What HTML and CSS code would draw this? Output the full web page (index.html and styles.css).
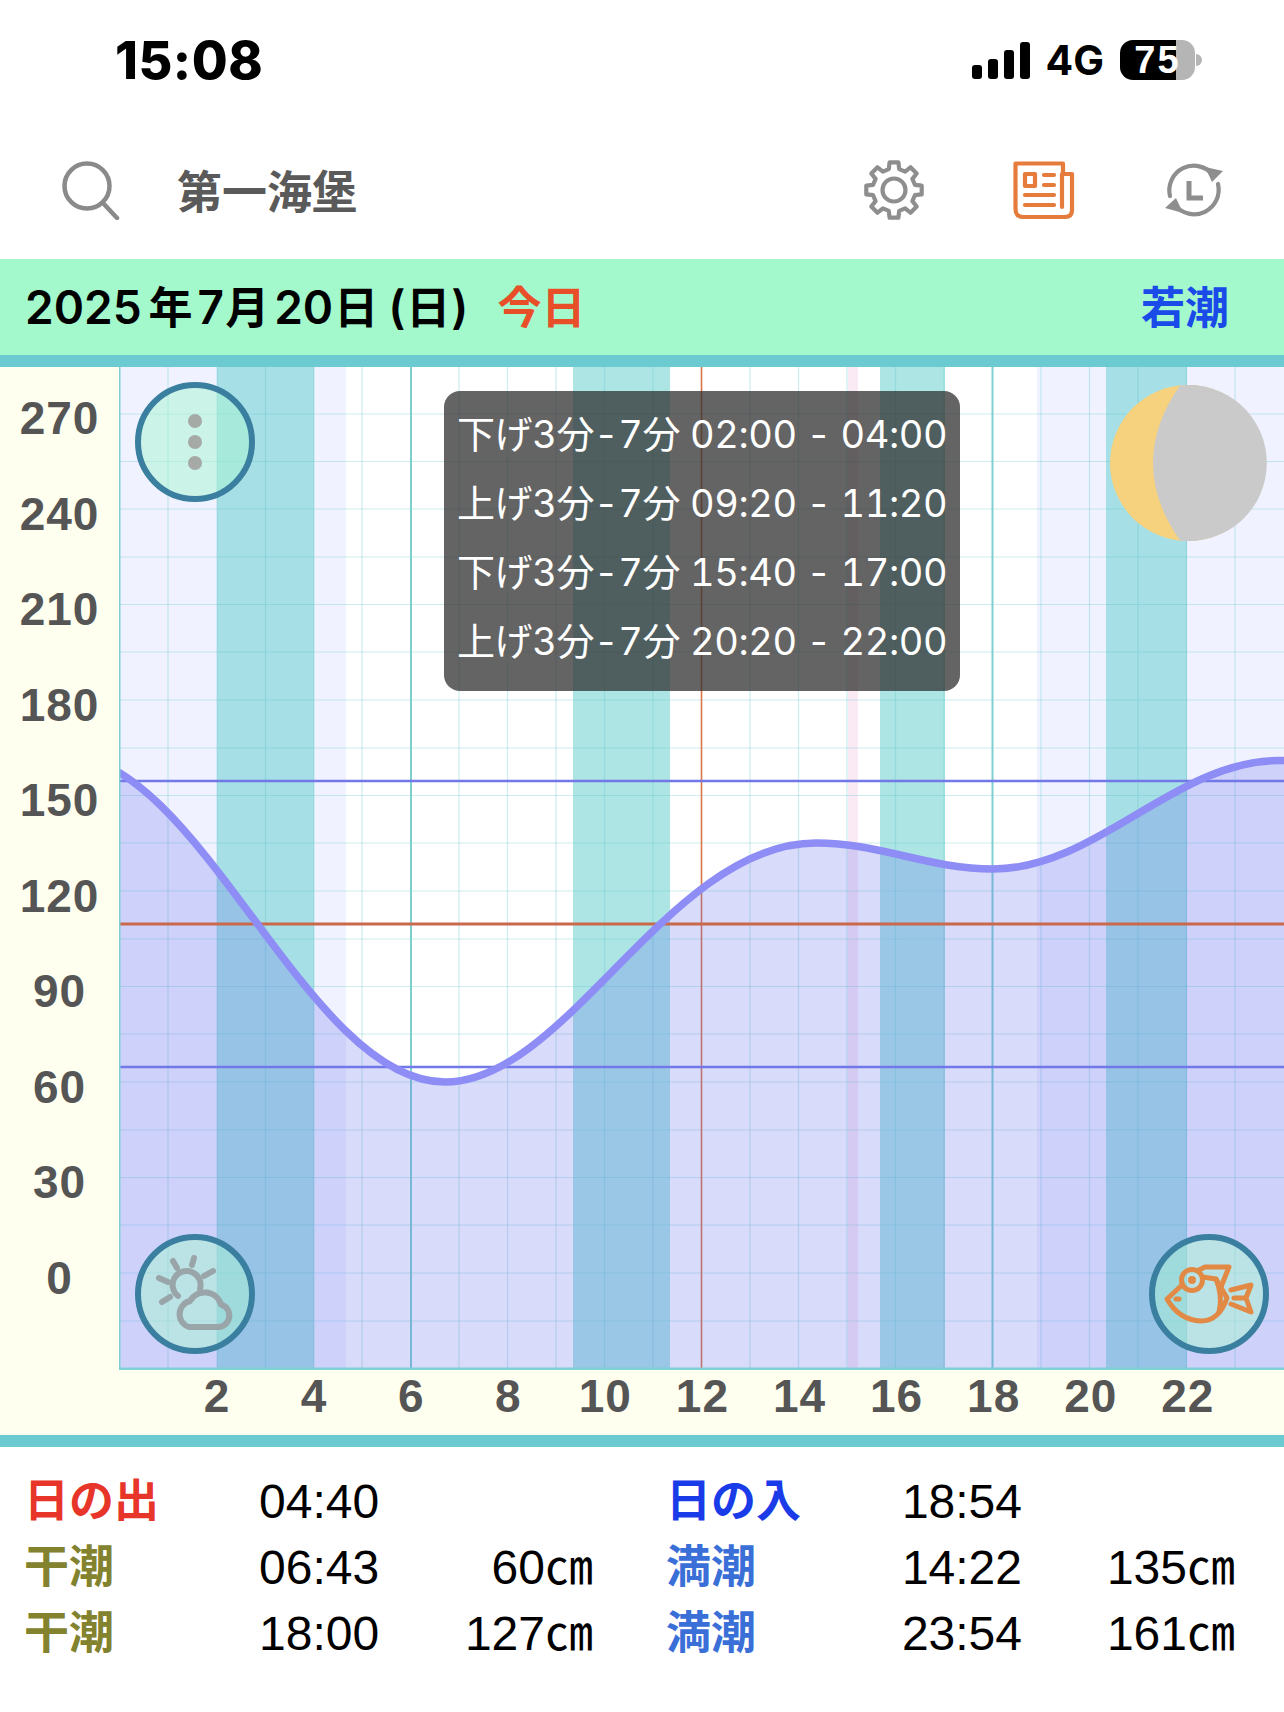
FILE: index.html
```html
<!DOCTYPE html>
<html lang="ja">
<head>
    <meta charset="UTF-8">
    <meta name="viewport" content="width=device-width, initial-scale=1.0">
    <title>潮見表</title>
    <link rel="stylesheet" href="styles.css">
</head>
<body>

    <div class="status-bar">
        <div class="clock-text">15:08</div>
        <div class="status-right">
            <svg class="signal" width="58" height="37" viewBox="0 0 58 37">
                <rect x="0" y="23" width="10" height="14" rx="3"/>
                <rect x="16" y="17" width="10" height="20" rx="3"/>
                <rect x="32" y="8" width="10" height="29" rx="3"/>
                <rect x="48" y="0" width="10" height="37" rx="3"/>
            </svg>
            <div class="network">4G</div>
            <div class="battery">75</div>
        </div>
    </div>

    <div class="search-row">
        <svg class="search-icon" width="60" height="60" viewBox="0 0 60 60">
            <circle cx="25" cy="26" r="22.5"/>
            <path d="M41 43 L55 58"/>
        </svg>
        <div class="place">第一海堡</div>
        <div class="tools">
            <svg class="tool gray" width="64" height="64" viewBox="-32 -32 64 64">
                <polygon points="-5.2,-20.9 -4.4,-27.7 4.4,-27.7 5.2,-20.9 11.1,-18.4 16.5,-22.7 22.7,-16.5 18.4,-11.1 20.9,-5.2 27.7,-4.4 27.7,4.4 20.9,5.2 18.4,11.1 22.7,16.5 16.5,22.7 11.1,18.4 5.2,20.9 4.4,27.7 -4.4,27.7 -5.2,20.9 -11.1,18.4 -16.5,22.7 -22.7,16.5 -18.4,11.1 -20.9,5.2 -27.7,4.4 -27.7,-4.4 -20.9,-5.2 -18.4,-11.1 -22.7,-16.5 -16.5,-22.7 -11.1,-18.4"/>
                <circle cx="0" cy="0" r="11.5"/>
            </svg>
            <svg class="tool orange" width="64" height="64" viewBox="-2 -4 64 64">
                <path d="M1.5 1.5 H49 V12 H58 V48 Q58 55 51 55 H9 Q1.5 55 1.5 47 Z"/>
                <path d="M48 12 V45"/>
                <rect x="11" y="12" width="10" height="12"/>
                <path d="M30 13 H40 M30 23 H40 M11 33 H40 M11 43 H40"/>
            </svg>
            <svg class="tool gray" width="64" height="64" viewBox="-32 -32 64 64">
                <path d="M-24 6 A24.5 24.5 0 0 1 19 -15"/>
                <path d="M24 -6 A24.5 24.5 0 0 1 -19 15"/>
                <polygon class="solid" points="11,-23 29,-19 18,-8"/>
                <polygon class="solid" points="-11,23 -29,18 -18,8"/>
                <path class="thick" d="M-5 -9 V8 H9"/>
            </svg>
        </div>
    </div>

    <div class="date-bar">
        <div class="date">2025<span class="kanji">年</span>7<span class="kanji tight">月</span>20<span class="kanji tight">日</span><span class="paren">(</span><span class="kanji flat">日</span>)</div>
        <div class="today">今日</div>
        <div class="tide-name">若潮</div>
    </div>

    <div class="chart">
        <div class="y-axis">
            <div>270</div>
            <div>240</div>
            <div>210</div>
            <div>180</div>
            <div>150</div>
            <div>120</div>
            <div>90</div>
            <div>60</div>
            <div>30</div>
            <div>0</div>
        </div>
        <div class="plot">
            <svg class="plot-svg" width="1165" height="1003" viewBox="0 0 1165 1003">
                <!-- 夜 -->
                <rect class="night" x="0" y="0" width="227" height="1003"/>
                <rect class="night" x="918" y="0" width="247" height="1003"/>
                <!-- 時合 -->
                <rect class="band" x="98" y="0" width="97" height="1003"/>
                <rect class="band" x="454" y="0" width="97" height="1003"/>
                <rect class="band" x="761" y="0" width="65" height="1003"/>
                <rect class="band" x="987" y="0" width="81" height="1003"/>
                <!-- 現在時刻 -->
                <rect class="now" x="729" y="0" width="10" height="1003"/>
                <!-- グリッド -->
                <path class="grid" d="M0 47 H1165 M0 94.5 H1165 M0 142 H1165 M0 190 H1165 M0 237.5 H1165 M0 285 H1165 M0 333 H1165 M0 381 H1165 M0 428.5 H1165 M0 476 H1165 M0 524 H1165 M0 572 H1165 M0 619.5 H1165 M0 667 H1165 M0 715 H1165 M0 763 H1165 M0 810.5 H1165 M0 858 H1165 M0 906 H1165 M0 954 H1165"/>
                <path class="grid" d="M49 0 V1003 M98 0 V1003 M146.5 0 V1003 M195 0 V1003 M243 0 V1003 M340 0 V1003 M388.5 0 V1003 M437 0 V1003 M485.5 0 V1003 M534 0 V1003 M631 0 V1003 M679.5 0 V1003 M728 0 V1003 M776.5 0 V1003 M825 0 V1003 M922 0 V1003 M970.5 0 V1003 M1019 0 V1003 M1067.5 0 V1003 M1116 0 V1003"/>
                <path class="grid-major" d="M292 0 V1003 M873.5 0 V1003"/>
                <path class="grid-noon" d="M582.5 0 V1003"/>
                <!-- 潮位 -->
                <path class="water" d="M-58 387 C82 387 186 715 326 715 C448 715 550 476 697 476 C761 476 810 502 874 502 C978 502 1056 393.5 1160 393.5 L1170 393.5 V1003 H-58 Z"/>
                <path class="line-blue" d="M0 414 H1165 M0 700 H1165"/>
                <path class="line-orange" d="M0 557 H1165"/>
                <path class="curve" d="M-58 387 C82 387 186 715 326 715 C448 715 550 476 697 476 C761 476 810 502 874 502 C978 502 1056 393.5 1160 393.5 L1170 393.5"/>
                <path class="frame" d="M0 0 V1002 H1165"/>
                <!-- 月齢 -->
                <circle class="moon-lit" cx="1069" cy="96" r="78"/>
                <path class="moon-dark" d="M1061 18.5 A78 78 0 1 1 1061 173.5 Q1034 135 1034 96 Q1034 57 1061 18.5 Z"/>
            </svg>

            <div class="round-btn top-left">
                <div class="dots"><span></span><span></span><span></span></div>
            </div>

            <div class="round-btn bottom-left">
                <svg class="btn-icon weather" width="108" height="108" viewBox="-54 -54 108 108">
                    <path d="M-17 2 A14 14 0 1 1 5 -5"/>
                    <path d="M-3 -29 L-1 -36 M-22 -33 L-18 -26 M9 -18 L18 -23 M-36 -16 L-27 -12 M-33 8 L-25 3"/>
                    <path d="M-6 33 H24 A11.5 11.5 0 0 0 26 10.5 A17 17 0 0 0 -5 7 A13.5 13.5 0 0 0 -6 33 Z"/>
                </svg>
            </div>

            <div class="round-btn bottom-right">
                <svg class="btn-icon fish" width="108" height="108" viewBox="-54 -54 108 108">
                    <circle cx="-17" cy="-14" r="10.5"/>
                    <circle class="pupil" cx="-17" cy="-14" r="4"/>
                    <path d="M-27 -9 L-42 5 Q-30 26 -8 27 Q10 27 18 4 L7 -15 L-6 -17"/>
                    <path d="M-33 5 H-30"/>
                    <path d="M-10 -24 L-4 -27 H20 L12 -7"/>
                    <path d="M22 -4 L42 -9 L37 4 L42 18 L22 10 M25 4 H37"/>
                    <path d="M7 -15 Q14 2 10 18"/>
                </svg>
            </div>

            <div class="tip">
                <div>下げ3分-7分 02:00 - 04:00</div>
                <div>上げ3分-7分 09:20 - 11:20</div>
                <div>下げ3分-7分 15:40 - 17:00</div>
                <div>上げ3分-7分 20:20 - 22:00</div>
            </div>
        </div>
    </div>

    <div class="x-axis">
        <div>2</div>
        <div>4</div>
        <div>6</div>
        <div>8</div>
        <div>10</div>
        <div>12</div>
        <div>14</div>
        <div>16</div>
        <div>18</div>
        <div>20</div>
        <div>22</div>
    </div>

    <div class="tide-table">
        <div class="label sunrise">日の出</div>
        <div class="time">04:40</div>
        <div class="height"></div>
        <div class="label sunset">日の入</div>
        <div class="time">18:54</div>
        <div class="height"></div>

        <div class="label low">干潮</div>
        <div class="time">06:43</div>
        <div class="height">60㎝</div>
        <div class="label high">満潮</div>
        <div class="time">14:22</div>
        <div class="height">135㎝</div>

        <div class="label low">干潮</div>
        <div class="time">18:00</div>
        <div class="height">127㎝</div>
        <div class="label high">満潮</div>
        <div class="time">23:54</div>
        <div class="height">161㎝</div>
    </div>

</body>
</html>
```

FILE: styles.css
```css
body {
    margin: 0;
    background: white;
    color: black;
    font-family: "Liberation Sans", "Noto Sans CJK JP", sans-serif;
}

/* status bar */
.status-bar {
    height: 120px;
    display: flex;
    justify-content: space-between;
    align-items: center;
    padding: 0 89px 0 115px;
}

.clock-text {
    font-family: Inter, "Liberation Sans", sans-serif;
    font-size: 52px;
    font-weight: 800;
    letter-spacing: 0.5px;
}

.status-right {
    display: flex;
    align-items: center;
    gap: 16px;
}

.network {
    font-family: Inter, "Liberation Sans", sans-serif;
    font-size: 41px;
    font-weight: 700;
}

.battery {
    position: relative;
    width: 75px;
    height: 40px;
    line-height: 41px;
    border-radius: 13px;
    background: linear-gradient(90deg, #000 75%, #b5b5b5 75%);
    color: white;
    font-size: 38px;
    font-weight: bold;
    letter-spacing: 2px;
    text-align: center;
}

.battery::after {
    content: "";
    position: absolute;
    right: -7px;
    top: 14px;
    width: 6px;
    height: 12px;
    border-radius: 0 6px 6px 0;
    background: #b5b5b5;
}

/* search row */
.search-row {
    height: 139px;
    display: flex;
    align-items: center;
    padding: 0 58px 0 62px;
}

.search-icon {
    fill: none;
    stroke: #8a8a8a;
    stroke-width: 4.5;
    stroke-linecap: round;
}

.place {
    margin-left: 55px;
    font-size: 45px;
    font-weight: bold;
    color: #5a5a5a;
}

.tools {
    margin-left: auto;
    display: flex;
    gap: 86px;
}

.tool {
    fill: none;
    stroke-width: 4.2;
    stroke-linejoin: round;
    stroke-linecap: round;
}

.tool.gray {
    stroke: #8e8e8e;
}

.tool.orange {
    stroke: #e67c3c;
}

.tool .solid {
    fill: #8e8e8e;
    stroke: none;
}

.tool .thick {
    stroke-width: 5;
    stroke-linecap: butt;
    stroke-linejoin: miter;
}

/* date */
.date-bar {
    box-sizing: content-box;
    height: 92px;
    display: flex;
    align-items: center;
    padding: 0 55px 4px 25px;
    background: #a3f9cc;
    border-bottom: 12px solid #6ccbd0;
}

.date {
    font-family: Inter, "Noto Sans CJK JP", sans-serif;
    font-size: 46px;
    font-weight: 600;
}

.kanji {
    margin: 0 5px 0 7px;
    font-size: 44px;
}

.kanji.tight {
    margin: 0 5px 0 1px;
}

.kanji.flat {
    margin: 0 1px;
}

.paren {
    margin-left: 5px;
}

.today {
    margin-left: 29px;
    font-size: 44px;
    font-weight: bold;
    color: #e84e28;
}

.tide-name {
    margin-left: auto;
    font-size: 44px;
    font-weight: bold;
    color: #1a4ae8;
}

/* chart */
.chart {
    display: flex;
    background: #fffff0;
}

.y-axis {
    width: 119px;
    padding-top: 4px;
    font-size: 46px;
    font-weight: bold;
    letter-spacing: 1px;
    color: #555;
    text-align: center;
}

.y-axis div {
    height: 95.5px;
    line-height: 95.5px;
}

.plot {
    position: relative;
    width: 1165px;
    height: 1003px;
    background: white;
}

.plot-svg {
    display: block;
}

.night {
    fill: #f0f3ff;
}

.band {
    fill: rgba(100, 205, 205, 0.53);
}

.now {
    fill: rgba(235, 170, 210, 0.25);
}

.grid {
    fill: none;
    stroke: rgba(90, 195, 200, 0.3);
    stroke-width: 1.2;
}

.grid-major {
    fill: none;
    stroke: #7fcfd2;
    stroke-width: 2;
}

.grid-noon {
    fill: none;
    stroke: #d9754a;
    stroke-width: 1.6;
}

.water {
    fill: rgba(103, 111, 235, 0.25);
}

.line-blue {
    fill: none;
    stroke: #7378e8;
    stroke-width: 2.6;
}

.line-orange {
    fill: none;
    stroke: #c9684a;
    stroke-width: 3;
}

.curve {
    fill: none;
    stroke: #8e8cf5;
    stroke-width: 7.5;
}

.frame {
    fill: none;
    stroke: #7fd0d2;
    stroke-width: 3;
}

.moon-lit {
    fill: #f6d27f;
}

.moon-dark {
    fill: #cacaca;
}

.round-btn {
    position: absolute;
    box-sizing: border-box;
    width: 120px;
    height: 120px;
    border: 6px solid #3a7fa0;
    border-radius: 50%;
    background: rgba(168, 243, 210, 0.5);
    display: flex;
    justify-content: center;
    align-items: center;
}

.round-btn.top-left {
    left: 16px;
    top: 15px;
}

.round-btn.bottom-left {
    left: 16px;
    bottom: 16px;
}

.round-btn.bottom-right {
    right: 15px;
    bottom: 16px;
}

.dots {
    display: flex;
    flex-direction: column;
    gap: 7px;
}

.dots span {
    width: 14px;
    height: 14px;
    border-radius: 50%;
    background: #a5aaa6;
}

.btn-icon {
    fill: none;
    stroke-linecap: round;
    stroke-linejoin: round;
}

.weather {
    stroke: #99a5a8;
    stroke-width: 6;
}

.fish {
    stroke: #e28a45;
    stroke-width: 5;
}

.fish .pupil {
    fill: #e28a45;
    stroke: none;
}

.tip {
    position: absolute;
    left: 325px;
    top: 24px;
    box-sizing: border-box;
    width: 516px;
    height: 300px;
    padding: 9px 13px;
    border-radius: 16px;
    background: rgba(48, 48, 48, 0.75);
    color: white;
    font-family: Inter, "Noto Sans CJK JP", sans-serif;
    font-size: 38px;
    font-weight: 400;
    font-variant-numeric: tabular-nums;
    letter-spacing: -0.4px;
    line-height: 69px;
    text-align: right;
    white-space: nowrap;
}

/* x labels */
.x-axis {
    height: 65px;
    display: flex;
    padding-left: 168.5px;
    background: #fffff0;
    border-bottom: 12px solid #6ccbd0;
    font-size: 46px;
    font-weight: bold;
    letter-spacing: 1px;
    line-height: 52px;
    color: #555;
}

.x-axis div {
    width: 97.08px;
    text-align: center;
}

/* table */
.tide-table {
    display: grid;
    grid-template-columns: 235px 120px 214px 73px 235px 121px 213px;
    grid-auto-rows: 66px;
    padding: 22px 0 0 24px;
    font-size: 48px;
    line-height: 66px;
}

.tide-table .label {
    font-size: 45px;
    font-weight: bold;
}

.tide-table .height {
    text-align: right;
}

.tide-table .time {
    text-align: right;
}

.tide-table .sunset,
.tide-table .high {
    grid-column-start: 5;
}

.sunrise {
    color: #e8352a;
}

.sunset {
    color: #1a3ce8;
}

.low {
    color: #82822f;
}

.high {
    color: #3a6fd8;
}
```
